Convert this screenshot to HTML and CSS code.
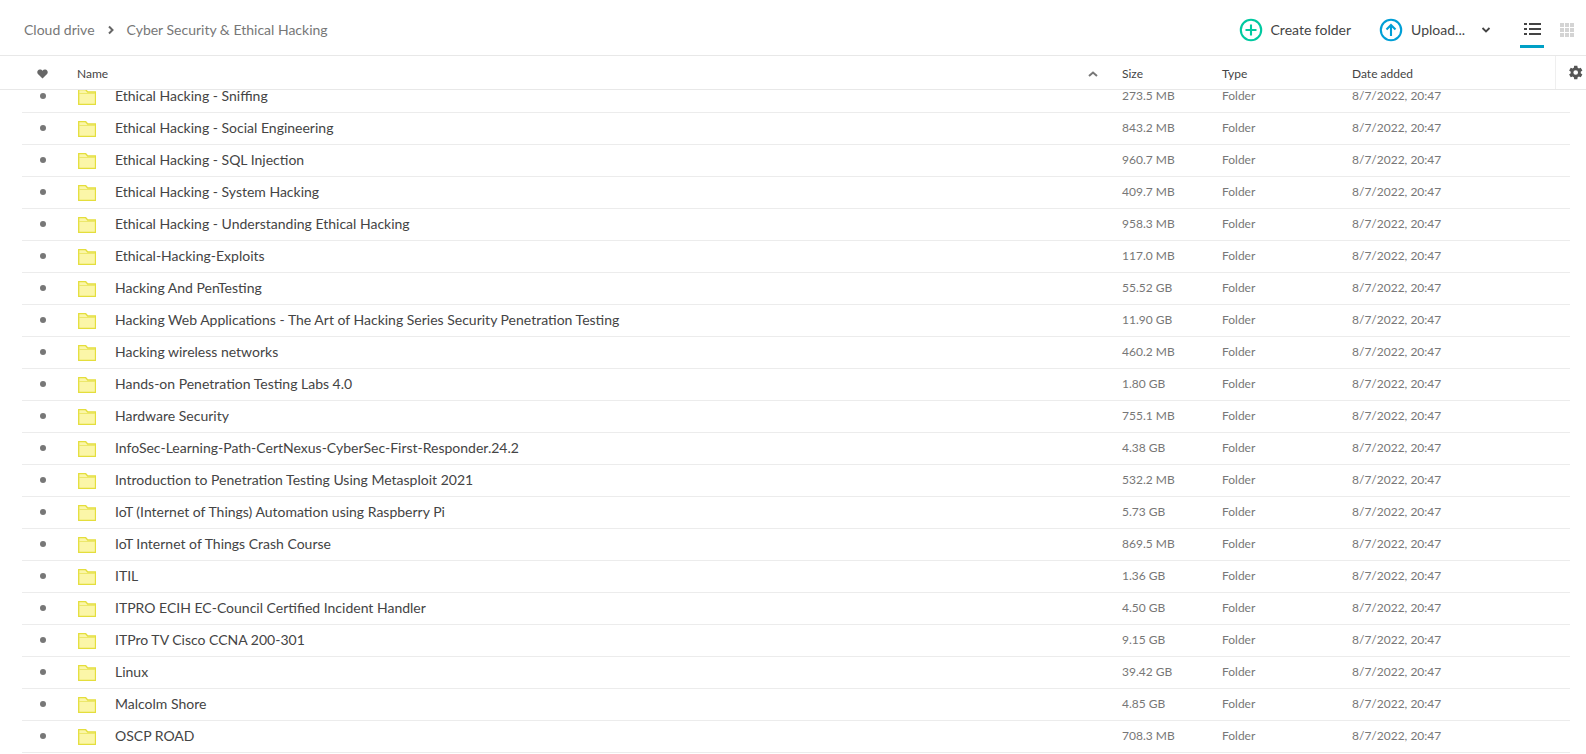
FILE: index.html
```html
<!DOCTYPE html>
<html lang="en">
<head>
  <meta charset="UTF-8">
  <title>Cyber Security &amp; Ethical Hacking</title>
  <link rel="stylesheet" href="styles.css">
</head>
<body>
  <header class="topbar">
    <nav class="crumbs">
      <span>Cloud drive</span>
      <svg class="crumb-arrow" viewBox="0 0 8 10"><path d="M2 1.5 5.5 5 2 8.5" fill="none" stroke="#666" stroke-width="2"/></svg>
      <span>Cyber Security &amp; Ethical Hacking</span>
    </nav>
    <div class="actions">
      <div class="action">
        <svg class="action-icon" viewBox="0 0 24 24"><circle cx="12" cy="12" r="10.2" fill="none" stroke="#00c9a0" stroke-width="2.1"/><path d="M12 6.5v11M6.5 12h11" fill="none" stroke="#00c9a0" stroke-width="2.1"/></svg>
        <span>Create folder</span>
      </div>
      <div class="action upload">
        <svg class="action-icon" viewBox="0 0 24 24"><circle cx="12" cy="12" r="10.2" fill="none" stroke="#009fd6" stroke-width="2.1"/><path d="M12 18V7M7.5 11.5 12 7l4.5 4.5" fill="none" stroke="#009fd6" stroke-width="2.1"/></svg>
        <span>Upload...</span>
        <svg class="chevron" viewBox="0 0 10 8"><path d="M1.5 2 5 5.5 8.500 2" fill="none" stroke="#444" stroke-width="1.800"/></svg>
      </div>
      <div class="view-btn active">
        <svg viewBox="0 0 17 12" width="17" height="12"><path d="M0 1h3M5 1h12M0 6h3M5 6h12M0 11h3M5 11h12" stroke="#444" stroke-width="2"/></svg>
      </div>
      <div class="view-btn">
        <svg viewBox="0 0 14 14" width="14" height="14" fill="#d4d4d4"><rect width="4" height="4"/><rect x="5" width="4" height="4"/><rect x="10" width="4" height="4"/><rect y="5" width="4" height="4"/><rect x="5" y="5" width="4" height="4"/><rect x="10" y="5" width="4" height="4"/><rect y="10" width="4" height="4"/><rect x="5" y="10" width="4" height="4"/><rect x="10" y="10" width="4" height="4"/></svg>
      </div>
    </div>
  </header>

  <div class="table-head">
    <div class="col-fav">
      <svg viewBox="0 0 12 11" width="11" height="10"><path d="M6 10.500 1 5.500C-.5 3.800.3.800 3 .6 4.300.5 5.300 1 6 2 6.700 1 7.700.5 9 .6c2.700.2 3.500 3.200 2 4.900z" fill="#666"/></svg>
    </div>
    <div class="col-name">
      <span>Name</span>
      <svg class="sort-arrow" viewBox="0 0 10 6" width="10" height="6"><path d="M1 5 5 1.500 9 5" fill="none" stroke="#777" stroke-width="2"/></svg>
    </div>
    <div class="col-size">Size</div>
    <div class="col-type">Type</div>
    <div class="col-date">Date added</div>
    <div class="col-gear">
      <svg viewBox="0 0 24 24" width="17" height="17"><path fill="#555" d="M19.400 13a7.600 7.600 0 0 0 0-2l2.300-1.800-2.300-3.900-2.700 1.100a7.700 7.700 0 0 0-1.700-1L14.600 2.500h-4.500L9.700 5.400a7.700 7.700 0 0 0-1.700 1L5.300 5.300 3 9.200 5.300 11a7.600 7.600 0 0 0 0 2L3 14.800l2.300 3.900 2.700-1.100a7.700 7.700 0 0 0 1.700 1l.4 2.900h4.500l.4-2.900a7.700 7.700 0 0 0 1.700-1l2.700 1.100 2.300-3.900zM12.300 15.300a3.300 3.300 0 1 1 0-6.600 3.300 3.300 0 0 1 0 6.600z"/></svg>
    </div>
  </div>

  <main class="file-list">
    <ul class="rows" id="rows"></ul>
  </main>

  <script src="rows.js"></script>
</body>
</html>
```

FILE: styles.css
```css
* {
  margin: 0;
  padding: 0;
  box-sizing: border-box;
}

html, body {
  height: 100%;
}

body {
  font-family: Lato, "Open Sans", sans-serif;
  background-color: #fff;
  color: #333;
  display: flex;
  flex-direction: column;
  overflow: hidden;
}

.topbar {
  height: 56px;
  flex: none;
  display: flex;
  align-items: center;
  justify-content: space-between;
  border-bottom: 1px solid #e8e8e8;
  padding: 4px 0 0 24px;
}

.crumbs {
  display: flex;
  align-items: center;
  font-size: 14px;
  color: #777;
}

.crumb-arrow {
  width: 8px;
  height: 10px;
  margin: 0 12px 0 12px;
}

.actions {
  display: flex;
  align-items: center;
  align-self: stretch;
  font-size: 14px;
  color: #444;
}

.action {
  display: flex;
  align-items: center;
  gap: 8px;
  margin-right: 28px;
}

.action-icon {
  width: 24px;
  height: 24px;
}

.upload {
  margin-right: 29px;
}

.chevron {
  width: 10px;
  height: 8px;
  margin-left: 8px;
}

.view-btn {
  width: 24px;
  height: 100%;
  display: flex;
  align-items: center;
  justify-content: center;
  margin-right: 11px;
}

.view-btn.active {
  border-bottom: 3px solid #00a0c6;
  height: 36px;
  padding-top: 1px;
  margin-top: 1px;
}

.view-btn:last-child {
  margin-right: 7px;
}

.table-head {
  height: 34px;
  flex: none;
  display: flex;
  align-items: center;
  font-size: 12px;
  color: #444;
  border-bottom: 1px solid #e8e8e8;
  padding-top: 2px;
  position: relative;
  z-index: 1;
  background: #fff;
}

.col-fav {
  width: 77px;
  padding-left: 37px;
  display: flex;
}

.col-name {
  flex: 1;
  display: flex;
  justify-content: space-between;
  align-items: center;
  padding-right: 24px;
}

.col-size {
  width: 100px;
}

.col-type {
  width: 130px;
}

.col-date {
  width: 203px;
}

.col-gear {
  width: 31px;
  align-self: stretch;
  margin-top: -2px;
  border-left: 1px solid #efefef;
  display: flex;
  align-items: center;
  justify-content: center;
  padding-left: 8px;
}

.file-list {
  flex: 1;
  overflow: hidden;
  padding: 0 16px 0 22px;
}

.rows {
  list-style: none;
  margin-top: -9px;
}

.row {
  height: 32px;
  display: flex;
  align-items: center;
  border-bottom: 1px solid #ececec;
  padding-bottom: 2px;
  font-size: 12px;
  color: #777;
}

.row-dot {
  width: 6px;
  height: 6px;
  border-radius: 50%;
  background-color: #777;
  margin: 0 32px 0 18px;
}

.row-folder {
  width: 18px;
  height: 16px;
  flex: none;
  margin-top: 2px;
}

.row-name {
  flex: 1;
  margin-left: 19px;
  font-size: 14px;
  color: #444;
}

.row-size {
  width: 100px;
}

.row-type {
  width: 130px;
}

.row-date {
  width: 218px;
}
```

FILE: rows.js
```js
// file rows as listed in the folder
var files = [
  ['Ethical Hacking - Sniffing', '273.5 MB'],
  ['Ethical Hacking - Social Engineering', '843.2 MB'],
  ['Ethical Hacking - SQL Injection', '960.7 MB'],
  ['Ethical Hacking - System Hacking', '409.7 MB'],
  ['Ethical Hacking - Understanding Ethical Hacking', '958.3 MB'],
  ['Ethical-Hacking-Exploits', '117.0 MB'],
  ['Hacking And PenTesting', '55.52 GB'],
  ['Hacking Web Applications - The Art of Hacking Series Security Penetration Testing', '11.90 GB'],
  ['Hacking wireless networks', '460.2 MB'],
  ['Hands-on Penetration Testing Labs 4.0', '1.80 GB'],
  ['Hardware Security', '755.1 MB'],
  ['InfoSec-Learning-Path-CertNexus-CyberSec-First-Responder.24.2', '4.38 GB'],
  ['Introduction to Penetration Testing Using Metasploit 2021', '532.2 MB'],
  ['IoT (Internet of Things) Automation using Raspberry Pi', '5.73 GB'],
  ['IoT Internet of Things Crash Course', '869.5 MB'],
  ['ITIL', '1.36 GB'],
  ['ITPRO ECIH EC-Council Certified Incident Handler', '4.50 GB'],
  ['ITPro TV Cisco CCNA 200-301', '9.15 GB'],
  ['Linux', '39.42 GB'],
  ['Malcolm Shore', '4.85 GB'],
  ['OSCP ROAD', '708.3 MB']
];

var folderIcon = '<svg class="row-folder" viewBox="0 0 18 16">' +
  '<path d="M.7 15.300V.7h7l2 2.300h7.800v12.300z" fill="#fbf6a8" stroke="#e4de3c" stroke-width="1.300"/>' +
  '<path d="M1 4.500h16" stroke="#ece76a"/></svg>';

var list = document.getElementById('rows');
files.forEach(function(file) {
  var row = document.createElement('li');
  row.className = 'row';
  row.innerHTML = '<span class="row-dot"></span>' + folderIcon +
    '<span class="row-name"></span>' +
    '<span class="row-size">' + file[1] + '</span>' +
    '<span class="row-type">Folder</span>' +
    '<span class="row-date">8/7/2022, 20:47</span>';
  row.querySelector('.row-name').textContent = file[0];
  list.appendChild(row);
});
```
